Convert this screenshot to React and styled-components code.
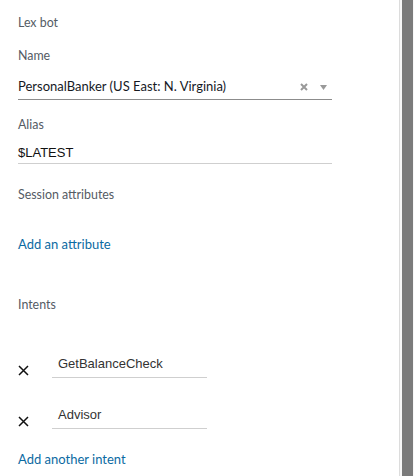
import styled, { createGlobalStyle } from 'styled-components';

const GlobalStyle = createGlobalStyle`
    html, body {
        margin: 0;
        padding: 0;
        background: #ffffff;
    }
    body {
        font-family: Lato, "Open Sans", sans-serif;
    }
`;

function IntentRow({ name }) {
    return (
        <IntentLine>
            <RemoveButton aria-label="remove intent">
                <svg width="11" height="11" viewBox="0 0 11 11">
                    <path d="M1 1 L10 10 M10 1 L1 10" stroke="#111" strokeWidth="1.5" fill="none" />
                </svg>
            </RemoveButton>
            <IntentInput>{name}</IntentInput>
        </IntentLine>
    );
}

export default function App() {
    return (
        <>
            <GlobalStyle />
            <Page>
                <Panel>
                    <Label $top={15}>Lex bot</Label>
                    <Label $top={17}>Name</Label>
                    <SelectBox>
                        <span>PersonalBanker (US East: N. Virginia)</span>
                        <SelectIcons>
                            <svg width="8" height="8" viewBox="0 0 8 8">
                                <path d="M1 1 L7 7 M7 1 L1 7" stroke="#999" strokeWidth="2" fill="none" />
                            </svg>
                            <svg width="7" height="5" viewBox="0 0 7 5">
                                <path d="M0 0 L7 0 L3.5 5 Z" fill="#999" />
                            </svg>
                        </SelectIcons>
                    </SelectBox>
                    <Label $top={17}>Alias</Label>
                    <TextField>$LATEST</TextField>
                    <Label $top={23}>Session attributes</Label>
                    <LinkText $top={32}>Add an attribute</LinkText>
                    <Label $top={44}>Intents</Label>
                    <IntentList>
                        <IntentRow name="GetBalanceCheck" />
                        <IntentRow name="Advisor" />
                    </IntentList>
                    <LinkText $top={21}>Add another intent</LinkText>
                </Panel>
                <ScrollTrack>
                    <ScrollThumb />
                </ScrollTrack>
            </Page>
        </>
    );
}

const Page = styled.div`
    width: 414px;
    height: 476px;
    display: flex;
    overflow: hidden;
`;

const Panel = styled.div`
    flex: 1;
    padding: 0 0 0 18px;
    display: flex;
    flex-direction: column;
    align-items: flex-start;
`;

const Label = styled.div`
    margin-top: ${(p) => p.$top}px;
    font-size: 12.4px;
    line-height: 16px;
    color: #545b64;
`;

const SelectBox = styled.div`
    width: 314px;
    margin-top: 13px;
    height: 23px;
    border-bottom: 1px solid #8c8c8c;
    display: flex;
    align-items: flex-start;
    justify-content: space-between;
    box-sizing: border-box;

    font-size: 13px;
    line-height: 18px;
    color: #16191f;
`;

const SelectIcons = styled.div`
    display: flex;
    align-items: center;
    gap: 12px;
    padding: 6px 5px 0 0;
`;

const TextField = styled.div`
    width: 314px;
    margin-top: 11px;
    height: 20px;
    box-sizing: border-box;
    border-bottom: 1px solid #cfcfcf;
    font-family: "Liberation Sans", Arial, sans-serif;
    font-size: 13px;
    line-height: 18px;
    color: #111;
`;

const LinkText = styled.div`
    margin-top: ${(p) => p.$top}px;
    font-size: 13px;
    line-height: 18px;
    color: #0b6aa2;
    cursor: pointer;
`;

const IntentList = styled.div`
    margin-top: 43px;
    display: flex;
    flex-direction: column;
    gap: 29px;
`;

const IntentLine = styled.div`
    display: flex;
    align-items: flex-end;
    gap: 23px;
`;

const RemoveButton = styled.button`
    width: 11px;
    height: 11px;
    padding: 0;
    margin-bottom: 2px;
    border: 0;
    background: none;
    display: flex;
`;

const IntentInput = styled.div`
    width: 155px;
    height: 22px;
    box-sizing: border-box;
    padding-left: 6px;
    border-bottom: 1px solid #cfcfcf;
    font-family: "Liberation Sans", Arial, sans-serif;
    font-size: 13px;
    line-height: 16px;
    color: #333;
`;

const ScrollTrack = styled.div`
    width: 15px;
    height: 100%;
    box-sizing: border-box;
    border-left: 1px solid #dcdcdc;
    background: #f7f7f7;
    display: flex;
    padding: 0 1px 0 2px;
`;

const ScrollThumb = styled.div`
    flex: 1;
    background: #7b7b7b;
`;
